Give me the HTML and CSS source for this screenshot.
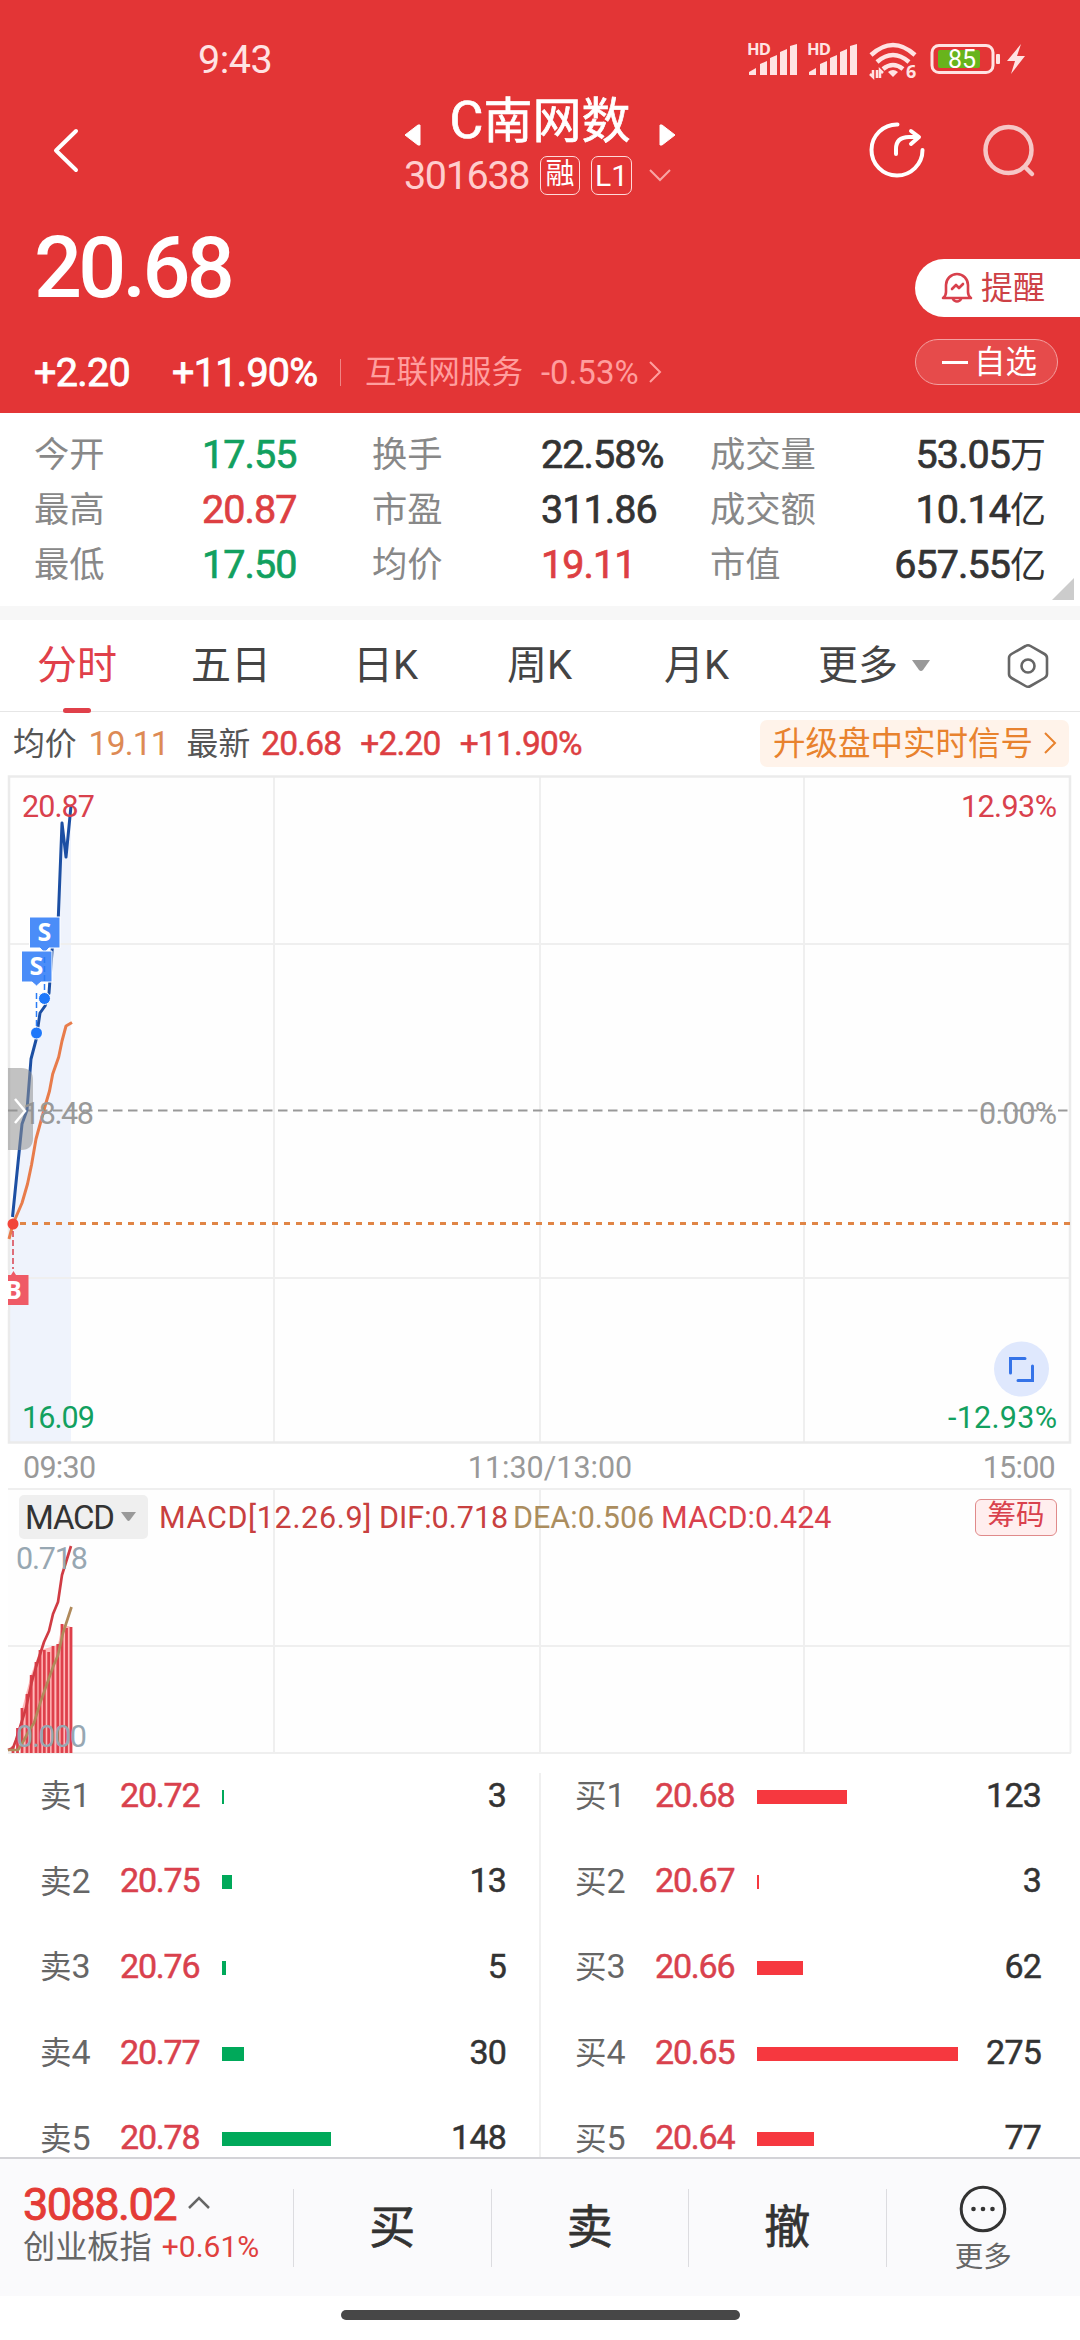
FILE: index.html
```html
<!DOCTYPE html>
<html lang="zh-CN">
<head>
    <meta charset="UTF-8">
    <meta name="viewport" content="width=device-width, initial-scale=1.0">
    <title>C南网数 301638</title>
    <link rel="stylesheet" href="styles.css">
</head>
<body>
    <div id="header">
        <div class="status">
            <span class="time">9:43</span>
            <svg class="status-icons" width="290" height="64" viewBox="740 27 290 64">
                <g fill="#ffe3e3">
                    <text class="hd" x="747" y="55" textLength="24">HD</text>
                    <path d="M749 75v-3l7-4v7zM760 75V64l7-3v14zM770 75V58l7-3v20zM780 75V52l7-3v26zM790 75V46l7-2v31z"/>
                    <text class="hd" x="807" y="55" textLength="24">HD</text>
                    <path d="M809 75v-3l7-4v7zM820 75V64l7-3v14zM830 75V58l7-3v20zM840 75V52l7-3v26zM850 75V46l7-2v31z"/>
                    <path d="M893 77l-5-5q5-4 10 0z"/>
                    <path d="M1021 44l-14 17h8l-4 13 14-18h-8z"/>
                    <rect x="996" y="54" width="4" height="10" rx="1"/>
                </g>
                <g fill="none" stroke="#ffe3e3" stroke-width="4.500">
                    <path d="M871 55q22-20 44 0M877 62q16-14 32 0M883 69q10-8 20 0"/>
                    <path stroke-width="2.500" d="M873 70v7l-3-3M877 78v-8M880 78v-8l3 3"/>
                    <rect x="932" y="45.500" width="61" height="27" rx="7" stroke-width="3"/>
                </g>
                <text class="hd six" x="906" y="78">6</text>
                <rect x="938" y="50" width="42" height="18" rx="2" fill="#68b41c"/>
                <text class="level" x="948" y="68">85</text>
            </svg>
        </div>
        <div class="nav">
            <svg class="back" width="28" height="48" viewBox="52 126 28 48"><path d="M76 131L56 150.500l20 19.500" fill="none" stroke="#fff" stroke-width="4" stroke-linecap="round" stroke-linejoin="round"/></svg>
            <div class="title">
                <div class="name">
                    <svg width="17" height="22" viewBox="0 0 17 22"><path d="M16 1v20h-2L1 11 14 1z" fill="#fff" stroke="#fff" stroke-linejoin="round"/></svg>
                    <span class="stock"><b>C</b>南网数</span>
                    <svg width="17" height="22" viewBox="0 0 17 22"><path d="M1 1v20h2l13-10L3 1z" fill="#fff" stroke="#fff" stroke-linejoin="round"/></svg>
                </div>
                <div class="code">
                    <span class="num">301638</span>
                    <i>融</i>
                    <i class="l1">L1</i>
                    <svg width="24" height="16" viewBox="0 0 24 16"><path d="M2 3l10 10L22 3" fill="none" stroke="#f8a5a5" stroke-width="2"/></svg>
                </div>
            </div>
            <svg class="share" width="60" height="60" viewBox="867 120 60 60">
                <g fill="none" stroke="#fff" stroke-width="4" stroke-linecap="round" stroke-linejoin="round">
                    <path d="M897.500 124.500a25.500 25.500 0 1 0 25 25.500"/>
                    <path d="M896 154v-5q0-12 13-12h9M911 131l8 6-8 7"/>
                </g>
            </svg>
            <svg class="search" width="56" height="56" viewBox="981 122 56 56">
                <g fill="none" stroke="#f6c6c6" stroke-width="4.500" stroke-linecap="round">
                    <circle cx="1008.500" cy="150" r="23"/>
                    <path d="M1025 167l7 7"/>
                </g>
            </svg>
        </div>
        <div class="quote">
            <div class="left">
                <div class="price num">20.68</div>
                <div class="change">
                    <span class="num diff">+2.20</span>
                    <span class="num pct">+11.90%</span>
                    <span class="sector">互联网服务</span>
                    <span class="num sector-pct">-0.53%</span>
                    <svg width="14" height="24" viewBox="0 0 14 24"><path d="M2 2l10 10L2 22" fill="none" stroke="#ff9e9e" stroke-width="2"/></svg>
                </div>
            </div>
            <div class="right">
                <div class="remind">
                    <svg width="34" height="34" viewBox="0 0 34 34">
                        <g fill="none" stroke="#d8404c" stroke-width="2.600" stroke-linejoin="round" stroke-linecap="round">
                            <path d="M6 21V14a11 11 0 0 1 22 0v7q0 4 3 6H3q3-2 3-6z"/>
                            <path d="M13 28a4.500 4.500 0 0 0 8 0"/>
                            <path d="M12 18l4-4 3 3 4-4"/>
                        </g>
                    </svg>
                    <span>提醒</span>
                </div>
                <div class="fav"><em></em><span>自选</span></div>
            </div>
        </div>
    </div>

    <div class="stats">
        <label>今开</label><span class="num down">17.55</span>
        <label>换手</label><span class="num">22.58%</span>
        <label>成交量</label><span class="num end">53.05<small>万</small></span>
        <label>最高</label><span class="num up">20.87</span>
        <label>市盈</label><span class="num">311.86</span>
        <label>成交额</label><span class="num end">10.14<small>亿</small></span>
        <label>最低</label><span class="num down">17.50</span>
        <label>均价</label><span class="num up">19.11</span>
        <label>市值</label><span class="num end">657.55<small>亿</small></span>
        <div class="corner"></div>
    </div>
    <div class="band"></div>

    <div class="tabs">
        <span class="on">分时</span>
        <span>五日</span>
        <span>日K</span>
        <span>周K</span>
        <span>月K</span>
        <span class="more">更多<svg width="20" height="13" viewBox="0 0 20 13"><path d="M1 1h18l-7 10q-2 2-4 0z" fill="#999"/></svg></span>
        <svg class="setting" width="44" height="46" viewBox="0 0 44 46">
            <g fill="none" stroke="#666" stroke-width="2.600" stroke-linejoin="round">
                <path d="M19.500 3q2.500-1.500 5 0l14 8q2.500 1.500 2.500 4v16q0 2.500-2.500 4l-14 8q-2.500 1.500-5 0l-14-8Q3 33.500 3 31V15q0-2.500 2.500-4z"/>
                <circle cx="22" cy="23" r="6.500"/>
            </g>
        </svg>
    </div>

    <div class="info">
        <span class="cn">均价</span><span class="num avg">19.11</span>
        <span class="cn">最新</span><span class="num up last">20.68</span>
        <span class="num up">+2.20</span>
        <span class="num up">+11.90%</span>
        <div class="signal"><span>升级盘中实时信号</span><svg width="14" height="24" viewBox="0 0 14 24"><path d="M2 2l10 10L2 22" fill="none" stroke="#e8822e" stroke-width="2"/></svg></div>
    </div>

    <!-- intraday price chart -->
    <svg class="chart" width="1080" height="678" viewBox="0 768 1080 678">
        <rect x="9" y="776.500" width="1061" height="666" fill="#fefefe"/>
        <path d="M9 1442V1239L13 1213 18 1163 22 1124 27 1110 31 1059 36 1040 40 1013 45 1006 49 993 52 945 58 925 62 823 66 857 71 806V1442z" fill="#eff3fc"/>
        <path d="M274 776v667M540 776v667M804 776v667M9 944h1061M9 1278h1061" stroke="#efefef" stroke-width="2" fill="none"/>
        <rect x="9" y="776.500" width="1061" height="666" fill="none" stroke="#ebebeb" stroke-width="2.500"/>
        <path d="M8 1110.500h1062" stroke="#999" stroke-width="2" stroke-dasharray="9.500 5.500"/>
        <path d="M8 1223.500h1062" stroke="#e08546" stroke-width="3" stroke-dasharray="6 6"/>
        <g fill="none" stroke-width="3" stroke-linejoin="round">
            <path d="M12.500 1217L18 1163 22 1124 27 1110 31 1059 36 1040 40 1013 45 1006 49 993 52.500 945 58 925 62 823 66 857 71 806" stroke="#1c4fa3"/>
            <path d="M9 1239L13 1224 22 1203 27.500 1184 31.500 1165 36 1139 44.500 1108 49.500 1091 52.700 1074 58.700 1057 62 1041 66 1026 72 1022.500" stroke="#e87c4b"/>
        </g>
        <circle cx="13" cy="1224" r="5.500" fill="#f2453a"/>
        <path d="M13 1231v38" stroke="#d9414d" stroke-width="1.500" stroke-dasharray="6 3"/>
        <path d="M8 1275h3l2.500-4 2.500 4h12.500v30H8z" fill="#ef5a66"/>
        <g fill="#4b8df8" stroke="#fff" stroke-width="1">
            <path d="M29.500 917H60v31H49l-4.500 5-4.500-5H29.500z"/>
            <path d="M21.500 951H52v31H41l-4.500 4-4.500-4H21.500z"/>
        </g>
        <path d="M36.500 993v36M44.500 957v36" stroke="#2a7cf5" stroke-width="1.500" stroke-dasharray="6 3"/>
        <g fill="#1f78fa" stroke="#fff" stroke-width="1">
            <circle cx="36.500" cy="1033" r="6"/>
            <circle cx="44.500" cy="998.500" r="6"/>
        </g>
        <text class="flag" x="44.500" y="941">S</text>
        <text class="flag" x="36.500" y="975">S</text>
        <text class="flag" x="13.500" y="1299">B</text>
        <rect y="1270" width="8" height="40" fill="#fff"/>
        <text class="axis up" x="22" y="817" textLength="73">20.87</text>
        <text class="axis up" x="961" y="817" textLength="96">12.93%</text>
        <text class="axis" x="23" y="1124" textLength="71">18.48</text>
        <text class="axis" x="979" y="1124" textLength="78">0.00%</text>
        <text class="axis down" x="22" y="1428" textLength="73">16.09</text>
        <text class="axis down" x="948" y="1428" textLength="109">-12.93%</text>
        <path d="M8 1068h13q12 0 12 12v58q0 12-12 12H8z" fill="#8f8f8f" fill-opacity=".55"/>
        <path d="M15 1099l10 12-10 12" fill="none" stroke="#fff" stroke-width="2.500"/>
        <circle cx="1021.500" cy="1369" r="27.500" fill="#dfe8fd"/>
        <path d="M1025 1358.500h-14.500V1373M1018 1380.500h14.500V1366" fill="none" stroke="#3573e8" stroke-width="3" stroke-linecap="round"/>
    </svg>

    <div class="times num">
        <span>09:30</span><span>11:30/13:00</span><span>15:00</span>
    </div>

    <div class="macd">
        <svg width="1080" height="266" viewBox="0 1488 1080 266">
            <rect x="8" y="1489" width="1062" height="263" fill="#fefefe"/>
            <path d="M8 1489h1063M8 1646h1063M8 1753h1063M274 1489v264M540 1489v264M804 1489v264M1070.500 1489v264" stroke="#efefef" stroke-width="2" fill="none"/>
            <path d="M22 1753v-44L31 1675 40 1650 58 1645 62 1624 71 1627V1753z" fill="#ffb9b9"/>
            <path d="M13 1753v-7M17.500 1753v-25M22 1753v-45M27 1753v-59M31.200 1753v-78M36 1753v-91M40 1753v-103M44.300 1753v-103M48.700 1753v-101M53 1753v-107M57.800 1753v-109M62 1753v-129M66.500 1753v-125M71 1753v-126" stroke="#de404b" stroke-width="2.800"/>
            <g fill="none" stroke-width="2.700" stroke-linejoin="round">
                <path d="M8 1750l5-2 3-8 10-32 5.500-25 4.500-16 8-25 5-11 4-17 5-12 4-27 9-29" stroke="#d03c44"/>
                <path d="M8 1750h10l6-10 6-11 4-6 6.500-21 12.500-35 5-12 5-22 8.500-26" stroke="#b08a5b"/>
            </g>
            <text class="axis dim" x="16" y="1569" textLength="72">0.718</text>
            <text class="axis dim" x="16" y="1747" textLength="71">0.000</text>
        </svg>
        <div class="macd-head">
            <div class="pick"><span>MACD</span><svg width="15" height="10" viewBox="0 0 15 10"><path d="M0 0h15l-6 8q-1.500 2-3 0z" fill="#999"/></svg></div>
            <span class="m1">MACD[12.26.9]</span>
            <span class="m2">DIF:0.718</span>
            <span class="m3">DEA:0.506</span>
            <span class="m4">MACD:0.424</span>
            <span class="chip">筹码</span>
        </div>
    </div>

    <div class="book">
        <div class="side sell">
            <div class="row"><label>卖<u>1</u></label><span class="num p">20.72</span><i style="width: 2px;"></i><span class="num v">3</span></div>
            <div class="row"><label>卖<u>2</u></label><span class="num p">20.75</span><i style="width: 10px;"></i><span class="num v">13</span></div>
            <div class="row"><label>卖<u>3</u></label><span class="num p">20.76</span><i style="width: 4px;"></i><span class="num v">5</span></div>
            <div class="row"><label>卖<u>4</u></label><span class="num p">20.77</span><i style="width: 22px;"></i><span class="num v">30</span></div>
            <div class="row"><label>卖<u>5</u></label><span class="num p">20.78</span><i style="width: 109px;"></i><span class="num v">148</span></div>
        </div>
        <div class="line"></div>
        <div class="side buy">
            <div class="row"><label>买<u>1</u></label><span class="num p">20.68</span><i style="width: 90px;"></i><span class="num v">123</span></div>
            <div class="row"><label>买<u>2</u></label><span class="num p">20.67</span><i style="width: 2px;"></i><span class="num v">3</span></div>
            <div class="row"><label>买<u>3</u></label><span class="num p">20.66</span><i style="width: 46px;"></i><span class="num v">62</span></div>
            <div class="row"><label>买<u>4</u></label><span class="num p">20.65</span><i style="width: 201px;"></i><span class="num v">275</span></div>
            <div class="row"><label>买<u>5</u></label><span class="num p">20.64</span><i style="width: 57px;"></i><span class="num v">77</span></div>
        </div>
    </div>

    <div class="bottom">
        <div class="index">
            <div class="index-top"><span class="num">3088.02</span><svg width="24" height="15" viewBox="0 0 24 15"><path d="M2 13L12 3l10 10" fill="none" stroke="#666" stroke-width="2.500"/></svg></div>
            <div class="index-sub"><span>创业板指</span><span class="num">+0.61%</span></div>
        </div>
        <div class="act">买</div>
        <div class="act">卖</div>
        <div class="act">撤</div>
        <div class="act all">
            <svg width="48" height="48" viewBox="0 0 48 48">
                <circle cx="24" cy="24" r="21.800" fill="none" stroke="#333" stroke-width="3"/>
                <g fill="#333"><circle cx="14.500" cy="24" r="2.300"/><circle cx="24" cy="24" r="2.300"/><circle cx="33.500" cy="24" r="2.300"/></g>
            </svg>
            <span>更多</span>
        </div>
    </div>
    <div class="home"></div>
</body>
</html>
```
FILE: styles.css
```css
*{
    margin: 0;
    padding: 0;
    box-sizing: border-box;
}
body{
    width: 1080px;
    height: 2340px;
    overflow: hidden;
    background: #fff;
    color: #333;
    font-family: Roboto, "Noto Sans CJK SC", sans-serif;
}
svg{
    display: block;
    flex: none;
}
span, label{white-space: nowrap;}
i, em{font-style: normal;}
u{text-decoration: none;}
.num{letter-spacing: -.024em;}
.up{color: #dd3f42; fill: #d9414d;}
.down{color: #12a05f; fill: #12a05f;}

/* header */
#header{
    height: 413px;
    background: #e33536;
    color: #fff;
}
.status{
    display: flex;
    justify-content: space-between;
    align-items: center;
    height: 85px;
    padding: 33px 50px 0 198px;
}
.time{
    font-size: 39.5px;
    letter-spacing: -.5px;
    color: #ffe3e3;
}
.hd{
    font-family: "Open Sans", sans-serif;
    font-size: 16.5px;
    font-weight: 700;
}
.six{
    font-size: 18px;
    fill: #ffe3e3;
}
.level{
    font-size: 25px;
    fill: #fff;
}
.nav{
    display: flex;
    align-items: center;
    height: 130px;
    padding-left: 52px;
}
.title{
    width: 272px;
    height: 110px;
    margin-left: 324px;
}
.name{
    display: flex;
    align-items: center;
    justify-content: space-between;
    height: 50px;
}
.name svg{margin-top: 30px;}
.stock{
    padding-bottom: 7px;
    font-size: 49px;
    -webkit-text-stroke: .7px #fff;
}
.stock b{
    font-size: 52px;
    font-weight: 400;
}
.code{
    display: flex;
    align-items: center;
    height: 40px;
    margin-top: 10px;
}
.code .num{
    width: 136px;
    font-size: 39.5px;
    letter-spacing: -.034em;
    color: #ffcdcd;
}
.code i{
    width: 40px;
    height: 39px;
    margin-right: 11px;
    border: 1.5px solid #ffd9d9;
    border-radius: 7px;
    font-size: 29px;
    line-height: 34px;
    text-align: center;
}
.code .l1{
    width: 41px;
    margin-right: 16px;
    font-size: 30px;
    line-height: 37px;
}
.share{margin-left: 191px;}
.search{margin-left: 54px;}
.quote{
    display: flex;
    justify-content: space-between;
}
.left{padding-left: 34px;}
.price{
    height: 100px;
    font-size: 84.5px;
    font-weight: 500;
    line-height: 108px;
    letter-spacing: -.044em;
}
.change{
    display: flex;
    align-items: center;
    height: 50px;
    margin-top: 32px;
}
.diff, .pct{
    font-size: 39.5px;
    letter-spacing: -.018em;
    -webkit-text-stroke: .8px #fff;
}
.diff{width: 138px;}
.pct{width: 168px;}
.sector{
    padding-left: 24px;
    border-left: 1.5px solid #f08585;
    font-size: 31.6px;
    line-height: 27px;
    color: #ff9e9e;
}
.sector-pct{
    margin: 0 9px 0 18px;
    font-size: 33px;
    letter-spacing: 0;
    color: #ff9e9e;
}
.right{
    width: 165px;
    padding-top: 44px;
}
.remind{
    display: flex;
    align-items: center;
    height: 58px;
    padding-left: 25px;
    background: #fff;
    border-radius: 29px 0 0 29px;
    font-size: 32px;
    color: #cd4146;
}
.remind span{
    margin-left: 7px;
    padding-bottom: 6px;
}
.fav{
    display: flex;
    align-items: center;
    width: 143px;
    height: 46px;
    margin-top: 22px;
    padding-left: 26px;
    border: 1.5px solid #f3a0a0;
    border-radius: 23px;
    background: #e64b4b;
    font-size: 31.5px;
}
.fav span{padding-bottom: 6px;}
.fav em{
    width: 26px;
    height: 3px;
    margin-right: 6px;
    background: #fff;
}

/* stats */
.stats{
    position: relative;
    display: grid;
    grid-template-columns: 168px 170px 169px 169px 109px 226px;
    grid-auto-rows: 55px;
    align-items: center;
    height: 193px;
    padding: 14px 0 0 34px;
    font-size: 39.5px;
}
.stats label{
    padding-bottom: 6px;
    font-size: 35.3px;
    color: #888;
}
.stats .num{
    line-height: 55px;
    -webkit-text-stroke: .7px;
}
.stats .end{
    height: 55px;
    text-align: right;
}
.stats small{
    font-size: 36px;
    line-height: 1;
    -webkit-text-stroke: 0;
}
.corner{
    position: absolute;
    right: 6px;
    bottom: 6px;
    border-left: 22px solid transparent;
    border-bottom: 22px solid #ccc;
}
.band{
    height: 14px;
    background: #f7f7f7;
}

/* tabs */
.tabs{
    display: flex;
    align-items: center;
    height: 92px;
    padding-left: 37px;
    border-bottom: 1.5px solid #e6e6e6;
    font-size: 40px;
    color: #444;
}
.tabs span{
    position: relative;
    width: 154px;
    padding-bottom: 7px;
}
.tabs span:nth-child(2){width: 162px;}
.tabs span:nth-child(4){width: 157px;}
.tabs .on{color: #e0404a;}
.tabs .on::after{
    content: "";
    position: absolute;
    left: 26px;
    bottom: -15px;
    width: 28px;
    height: 5px;
    border-radius: 3px;
    background: #e0404a;
}
.tabs .more{
    display: flex;
    align-items: center;
    width: 188px;
}
.more svg{margin: 7px 0 0 13px;}

.info{
    display: flex;
    align-items: center;
    height: 56px;
    padding: 6px 11px 0 13px;
    font-size: 33.5px;
}
.cn{
    padding-bottom: 5px;
    font-size: 31.8px;
    color: #555;
}
.avg{
    width: 98px;
    margin-left: 12px;
    color: #dd8a55;
}
.info .up{
    margin-right: 19px;
    -webkit-text-stroke: .5px;
}
.info .up.last{margin-left: 11px;}
.signal{
    display: flex;
    align-items: center;
    justify-content: space-between;
    width: 309px;
    height: 47px;
    margin-left: auto;
    padding: 0 12px 0 13px;
    background: #fff3ea;
    border-radius: 7px;
    font-size: 32.5px;
    color: #e8822e;
}
.signal span{padding-bottom: 5px;}

/* charts */
.axis{
    font-size: 30.5px;
    fill: #999;
}
.axis.up{fill: #d9414d;}
.axis.down{fill: #12a05f;}
.axis.dim{fill: #97a7b2;}
.flag{
    font-family: "Open Sans", sans-serif;
    font-size: 25px;
    font-weight: 700;
    fill: #fff;
    text-anchor: middle;
}
.times{
    display: flex;
    justify-content: space-between;
    align-items: center;
    height: 42px;
    padding: 0 25px 0 23px;
    font-size: 30.5px;
    color: #999;
}
.times span:nth-child(2){
    padding-left: 22px;
    letter-spacing: 0;
}
.macd{
    position: relative;
    height: 264px;
}
.macd-head{
    position: absolute;
    top: 7px;
    left: 19px;
    display: flex;
    align-items: center;
    width: 1038px;
    height: 44px;
    font-size: 30.5px;
}
.pick{
    display: flex;
    align-items: center;
    justify-content: space-between;
    width: 129px;
    height: 44px;
    margin-right: 11px;
    padding: 0 12px 0 6px;
    background: #efefef;
    border-radius: 5px;
    font-size: 33px;
    letter-spacing: -1.2px;
}
.m1{
    width: 220px;
    letter-spacing: .65px;
    color: #c8403f;
}
.m2{width: 134px; color: #c8403f;}
.m3{width: 148px; color: #ab8d5e;}
.m4{color: #d9414d;}
.chip{
    width: 82px;
    height: 37px;
    margin-left: auto;
    border: 1.5px solid #e08a8a;
    border-radius: 6px;
    background: #ffeeee;
    font-size: 28.5px;
    line-height: 32px;
    text-align: center;
    color: #d9414d;
}

/* order book */
.book{
    display: flex;
    height: 405px;
}
.side{width: 540px;}
.line{
    width: 2px;
    margin: 21px -1px 0;
    background: #f0f0f0;
}
.row{
    display: flex;
    align-items: center;
    height: 85.6px;
    padding: 0 34px 0 40px;
    font-size: 34px;
}
.buy .row{padding: 0 39px 0 35px;}
.row label{
    width: 80px;
    padding-bottom: 3px;
    font-size: 31.5px;
    color: #666;
}
.row u{font-size: 34px;}
.row .p{
    width: 102px;
    letter-spacing: -.036em;
    -webkit-text-stroke: .5px;
    color: #d9414d;
}
.row i{
    height: 14px;
    margin-top: 4px;
    background: #00a95a;
}
.buy .row i{background: #f6383f;}
.row .v{
    margin-left: auto;
    -webkit-text-stroke: .5px;
}

/* bottom bar */
.bottom{
    display: flex;
    align-items: center;
    height: 139px;
    border-top: 2px solid #d3d3d7;
    background: #fafafc;
}
.index{
    flex: none;
    width: 293px;
    padding: 0 0 10px 23px;
}
.index-top{
    display: flex;
    align-items: center;
    height: 46px;
    color: #e43b36;
    font-size: 45px;
    -webkit-text-stroke: .9px;
}
.index-top .num{letter-spacing: -.034em;}
.index-top svg{margin: -4px 0 0 11px;}
.index-sub{
    display: flex;
    height: 36px;
    align-items: center;
    font-size: 32.2px;
    color: #666;
}
.index-sub span{padding-bottom: 4px;}
.index-sub .num{
    margin: 6px 0 0 10px;
    font-size: 30px;
    letter-spacing: 0;
    color: #e0403e;
}
.act{
    flex: none;
    width: 197.5px;
    height: 78px;
    border-left: 1.5px solid #dcdce0;
    font-size: 46px;
    line-height: 76px;
    text-align: center;
    -webkit-text-stroke: .7px;
}
.all{
    display: flex;
    flex-direction: column;
    align-items: center;
    width: 194.5px;
    font-size: 28.5px;
    line-height: 28px;
    color: #666;
    -webkit-text-stroke: 0;
}
.all svg{margin-top: -4px;}
.all span{margin-top: 11px;}
.home{
    width: 399px;
    height: 10px;
    margin: 14px auto 0;
    border-radius: 5px;
    background: #474747;
}
```
